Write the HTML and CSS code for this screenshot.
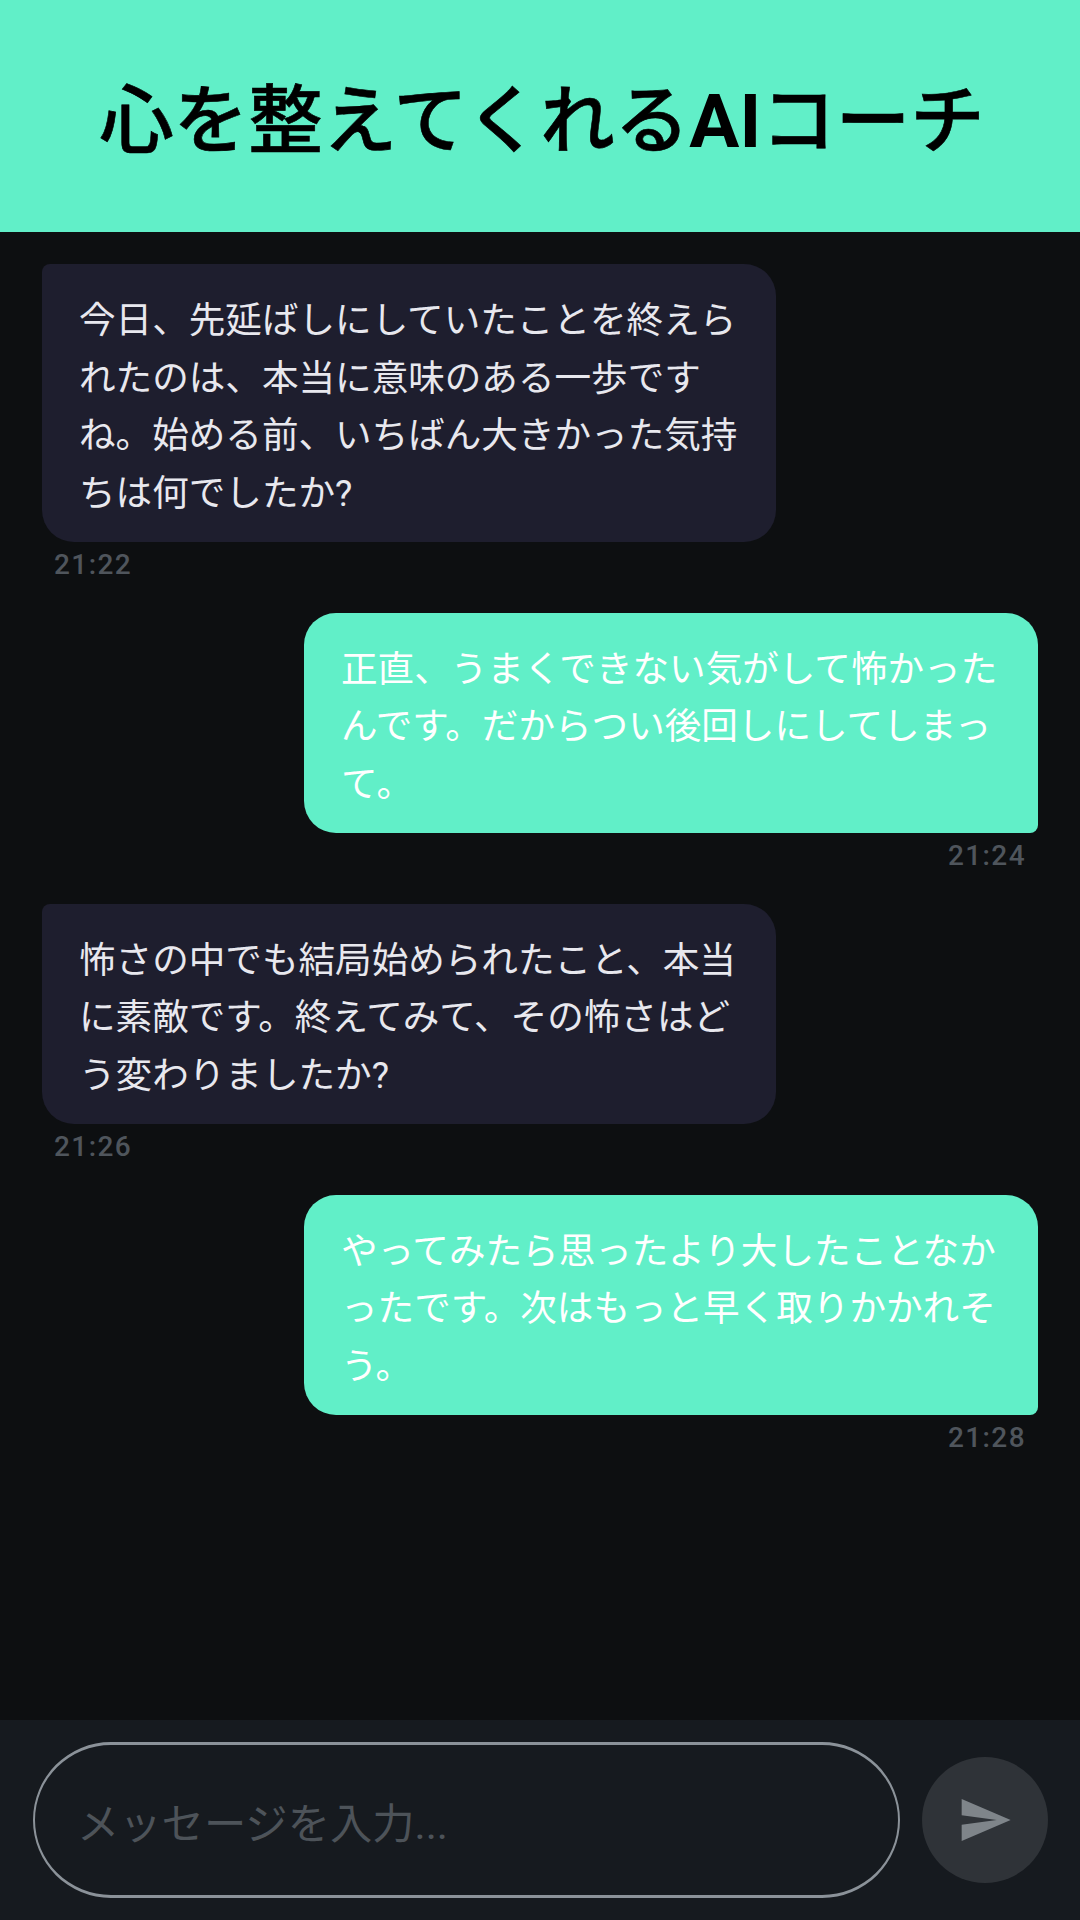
FILE: index.html
```html
<!DOCTYPE html>
<html lang="ja">
<head>
    <meta charset="UTF-8">
    <meta name="viewport" content="width=device-width, initial-scale=1.0">
    <title>心を整えてくれるAIコーチ</title>
    <link rel="stylesheet" href="styles.css">
</head>
<body>

<div class="app">
    <header class="app-header">
        <h1 class="app-title">心を整えてくれる<b class="app-title-latin">AI</b>コーチ</h1>
    </header>

    <main class="messages">
        <div class="message coach">
            <p class="bubble">今日、先延ばしにしていたことを終えられたのは、本当に意味のある一歩ですね。始める前、いちばん大きかった気持ちは何でしたか?</p>
            <span class="time">21:22</span>
        </div>
        <div class="message user">
            <p class="bubble">正直、うまくできない気がして怖かったんです。だからつい後回しにしてしまって。</p>
            <span class="time">21:24</span>
        </div>
        <div class="message coach">
            <p class="bubble">怖さの中でも結局始められたこと、本当に素敵です。終えてみて、その怖さはどう変わりましたか?</p>
            <span class="time">21:26</span>
        </div>
        <div class="message user">
            <p class="bubble">やってみたら思ったより大したことなかったです。次はもっと早く取りかかれそう。</p>
            <span class="time">21:28</span>
        </div>
    </main>

    <footer class="composer">
        <input type="text" class="composer-input" placeholder="メッセージを入力...">
        <button type="button" class="send-btn" aria-label="送信">
            <svg class="send-icon" viewBox="0 0 24 24"><path d="M2.01 21L23 12 2.01 3 2 10l15 2-15 2z"/></svg>
        </button>
    </footer>
</div>

</body>
</html>
```

FILE: styles.css
```css
/* Global Styles */
body {
    margin: 0;
    background: #0d0f11;
    font-family: Roboto, "Noto Sans CJK JP", sans-serif;
}

.app {
    display: flex;
    flex-direction: column;
    height: 1920px;
}

/* Header */
.app-header {
    flex: none;
    height: 232px;
    display: flex;
    justify-content: center;
    align-items: center;
    background: #61efc8;
}

.app-title {
    margin: 0 0 3px 4px;
    font-size: 74.5px;
    font-weight: 500;
    color: #000;
    -webkit-text-stroke: 0.6px #000;
}

.app-title-latin {
    font-weight: 700;
    -webkit-text-stroke: 0;
}

/* Messages */
.messages {
    flex: 1;
    display: flex;
    flex-direction: column;
    gap: 30.5px;
    padding: 32px 42px;
}

.message {
    display: flex;
    flex-direction: column;
    align-items: flex-start;
}

.message.user {
    align-items: flex-end;
}

.bubble {
    box-sizing: border-box;
    width: 734px;
    margin: 0;
    padding: 28px 35px 20px 37px;
    font-size: 36.6px;
    line-height: 57.5px;
}

.coach .bubble {
    background: #1e1e2e;
    color: #e8e8ee;
    border-radius: 8px 32px 32px 32px;
}

.user .bubble {
    background: #61efc8;
    color: #fff;
    border-radius: 32px 32px 8px 32px;
}

.time {
    height: 34px;
    margin: 6px 12px 0;
    font-size: 28px;
    font-weight: 500;
    line-height: 34px;
    letter-spacing: 1.4px;
    color: #4f555c;
}

/* Composer */
.composer {
    flex: none;
    height: 200px;
    display: flex;
    align-items: center;
    gap: 22px;
    padding: 0 32px 0 33px;
    box-sizing: border-box;
    background: #161a1f;
}

.composer-input {
    flex: 1;
    box-sizing: border-box;
    height: 156px;
    padding: 8px 42px 0;
    background: transparent;
    border: solid #8b9299;
    border-width: 3px 2px;
    border-radius: 78px;
    font-family: inherit;
    font-size: 42.3px;
    outline: none;
}

.composer-input::placeholder {
    color: #4d5359;
}

.send-btn {
    flex: none;
    width: 126px;
    height: 126px;
    display: flex;
    justify-content: center;
    align-items: center;
    padding: 0;
    background: #2f3338;
    border: none;
    border-radius: 50%;
}

.send-icon {
    width: 56px;
    height: 56px;
    fill: #7f858a;
}
```
